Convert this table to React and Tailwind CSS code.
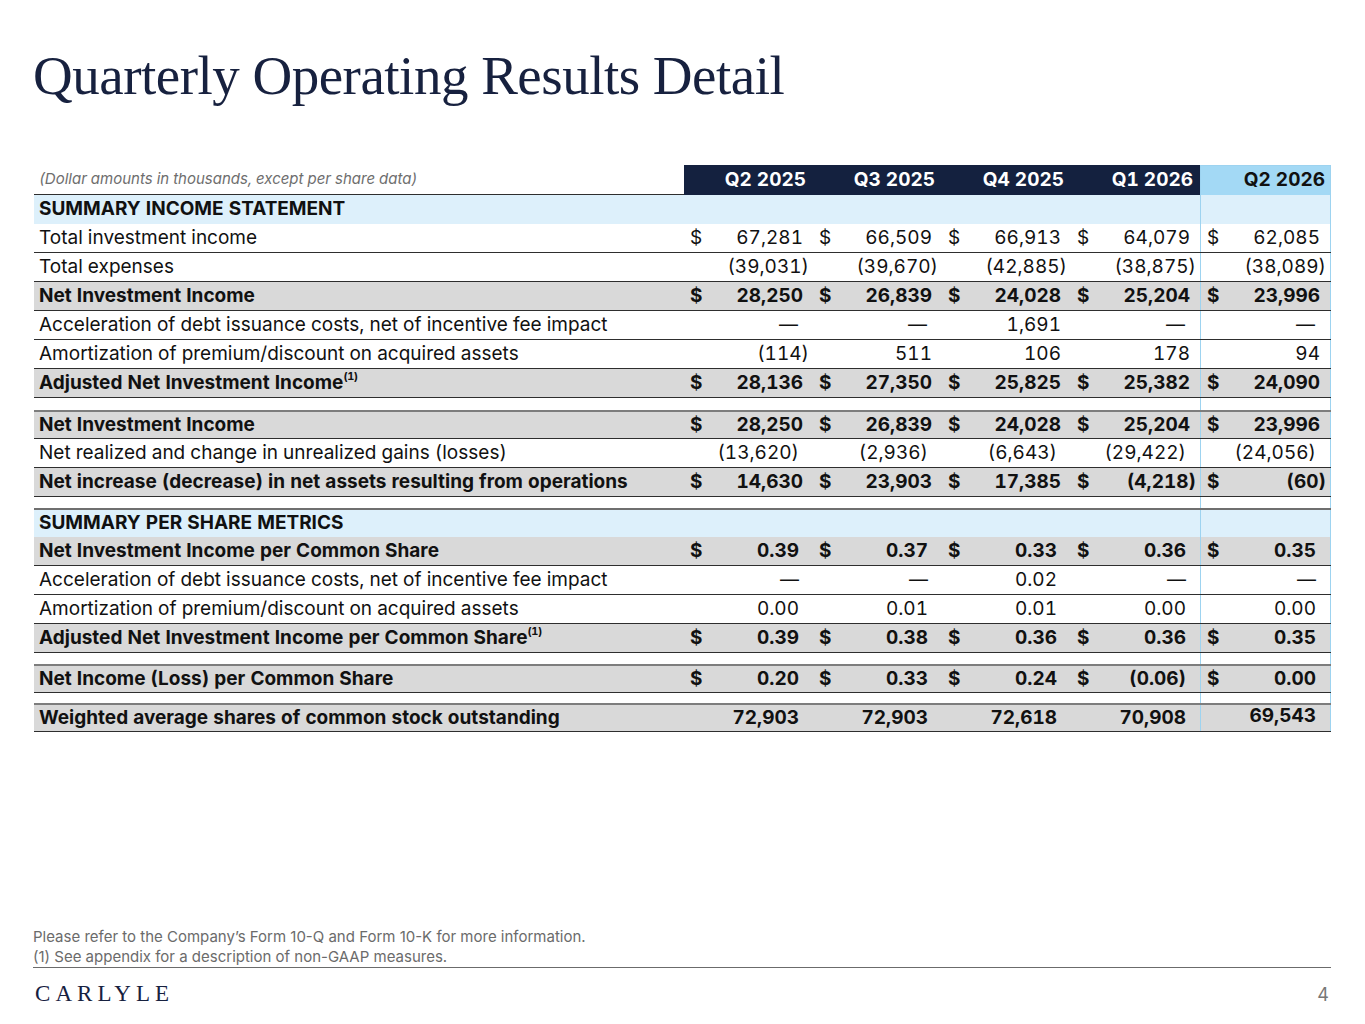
import React from "react";

const QUARTERS = ["Q2 2025", "Q3 2025", "Q4 2025", "Q1 2026", "Q2 2026"];

// kind: row | section | gap. pad "tight" pulls every value in the row in from
// the right edge (rows where parens do not hang in the source deck).
const ROWS = [
  { kind: "section", label: "SUMMARY INCOME STATEMENT", first: true },
  { kind: "row", label: "Total investment income", dollar: true, vals: ["67,281", "66,509", "66,913", "64,079", "62,085"] },
  { kind: "row", label: "Total expenses", vals: ["(39,031)", "(39,670)", "(42,885)", "(38,875)", "(38,089)"] },
  { kind: "row", label: "Net Investment Income", bold: true, dollar: true, vals: ["28,250", "26,839", "24,028", "25,204", "23,996"] },
  { kind: "row", label: "Acceleration of debt issuance costs, net of incentive fee impact", vals: ["—", "—", "1,691", "—", "—"] },
  { kind: "row", label: "Amortization of premium/discount on acquired assets", vals: ["(114)", "511", "106", "178", "94"] },
  { kind: "row", label: "Adjusted Net Investment Income", note: true, bold: true, dollar: true, vals: ["28,136", "27,350", "25,825", "25,382", "24,090"] },
  { kind: "gap", h: "h-[12px]" },
  { kind: "row", label: "Net Investment Income", bold: true, dollar: true, rule: true, vals: ["28,250", "26,839", "24,028", "25,204", "23,996"] },
  { kind: "row", label: "Net realized and change in unrealized gains (losses)", pad: "tight", vals: ["(13,620)", "(2,936)", "(6,643)", "(29,422)", "(24,056)"] },
  { kind: "row", label: "Net increase (decrease) in net assets resulting from operations", bold: true, dollar: true, vals: ["14,630", "23,903", "17,385", "(4,218)", "(60)"] },
  { kind: "gap", h: "h-[11px]" },
  { kind: "section", label: "SUMMARY PER SHARE METRICS" },
  { kind: "row", label: "Net Investment Income per Common Share", bold: true, dollar: true, pad: "tight", vals: ["0.39", "0.37", "0.33", "0.36", "0.35"] },
  { kind: "row", label: "Acceleration of debt issuance costs, net of incentive fee impact", pad: "tight", vals: ["—", "—", "0.02", "—", "—"] },
  { kind: "row", label: "Amortization of premium/discount on acquired assets", pad: "tight", vals: ["0.00", "0.01", "0.01", "0.00", "0.00"] },
  { kind: "row", label: "Adjusted Net Investment Income per Common Share", note: true, bold: true, dollar: true, pad: "tight", vals: ["0.39", "0.38", "0.36", "0.36", "0.35"] },
  { kind: "gap", h: "h-[11px]" },
  { kind: "row", label: "Net Income (Loss) per Common Share", bold: true, dollar: true, rule: true, pad: "tight", vals: ["0.20", "0.33", "0.24", "(0.06)", "0.00"] },
  { kind: "gap", h: "h-[10px]" },
  { kind: "row", label: "Weighted average shares of common stock outstanding", bold: true, rule: true, pad: "tight", last: true, vals: ["72,903", "72,903", "72,618", "70,908", "69,543"] },
];

function padFor(v, row) {
  if (row.pad === "tight") return "pr-[14px]";
  if (v === "—") return "pr-[15px]";
  if (v.startsWith("(")) return "pr-[4px]";
  return "pr-[10px]";
}

function ValueCell({ v, row, idx }) {
  const isLast = idx === 4;
  return (
    <div
      className={`flex h-full items-center ${row.dollar ? "justify-between" : "justify-end"} ${
        isLast ? "w-[131px] border-x border-[#9dd3f0]" : "w-[129px]"
      } ${isLast && row.last ? "items-end pb-[1px]" : ""}`}
    >
      {row.dollar && <span className="pl-[6px]">$</span>}
      <span className={padFor(v, row)}>{v}</span>
    </div>
  );
}

function TableRow({ row }) {
  if (row.kind === "gap") {
    return (
      <div className={`flex ${row.h}`}>
        <div className="w-[1166px]" />
        <div className="w-[131px] border-x border-[#9dd3f0]" />
      </div>
    );
  }

  if (row.kind === "section") {
    return (
      <div className={`flex h-[29px] bg-[#ddf0fb] ${row.first ? "" : "border-t-2 border-[#6f6f6f]"}`}>
        <div className="w-[1166px] flex items-center pl-[5px] font-bold">{row.label}</div>
        <div className="w-[131px] border-x border-[#9dd3f0]" />
      </div>
    );
  }

  return (
    <div
      className={`flex h-[29px] border-b border-[#2e2e2e] ${
        row.bold ? "bg-[#d9d9d9] font-bold" : "bg-white"
      } ${row.rule ? "border-t-2 border-t-[#7d7d7d]" : ""}`}
    >
      <div className="w-[650px] flex items-center pl-[5px] whitespace-nowrap">
        {row.label}
        {row.note && <sup className="text-[11px] tracking-[-0.5px] -top-[7px]">(1)</sup>}
      </div>
      {row.vals.map((v, i) => (
        <ValueCell key={i} v={v} row={row} idx={i} />
      ))}
    </div>
  );
}

export default function App() {
  return (
    <div className="w-[1365px] h-[1024px] bg-white flex flex-col text-[#111] font-[Inter,sans-serif]">
      <h1 className="pt-[46px] pl-[33px] text-[55px] leading-[60px] text-[#17213f] font-['Liberation_Serif',serif] tracking-[-0.5px]">
        Quarterly Operating Results Detail
      </h1>

      <div className="mt-[59px] ml-[34px] w-[1297px] text-[19px] tabular-nums">
        {/* header */}
        <div className="flex h-[30px]">
          <div className="w-[650px] flex items-center pl-[5px] border-b border-[#2e2e2e] text-[15px] italic text-[#6e6e6e]">
            (Dollar amounts in thousands, except per share data)
          </div>
          <div className="flex bg-[#14213f] text-white font-bold">
            {QUARTERS.slice(0, 4).map((q) => (
              <div key={q} className="w-[129px] flex items-center justify-end pr-[7px]">
                {q}
              </div>
            ))}
          </div>
          <div className="w-[131px] flex items-center justify-end pr-[5px] bg-[#a3d9f5] border-x border-t border-[#9dd3f0] font-bold text-[#111]">
            {QUARTERS[4]}
          </div>
        </div>

        {ROWS.map((row, i) => (
          <TableRow key={i} row={row} />
        ))}
      </div>

      <div className="mt-auto px-[33px] pb-[16px]">
        <div className="w-[1298px] border-b border-[#6b6b6b] text-[15px] leading-[20px] text-[#6b6b6b]">
          <p>Please refer to the Company’s Form 10-Q and Form 10-K for more information.</p>
          <p>(1) See appendix for a description of non-GAAP measures.</p>
        </div>
        <div className="w-[1298px] mt-[12px] flex items-center justify-between h-[28px]">
          <span className="pl-[2px] font-['Liberation_Serif',serif] text-[23px] tracking-[0.22em] text-[#17213f]">
            CARLYLE
          </span>
          <span className="pr-[2px] text-[18px] text-[#777]">4</span>
        </div>
      </div>
    </div>
  );
}
